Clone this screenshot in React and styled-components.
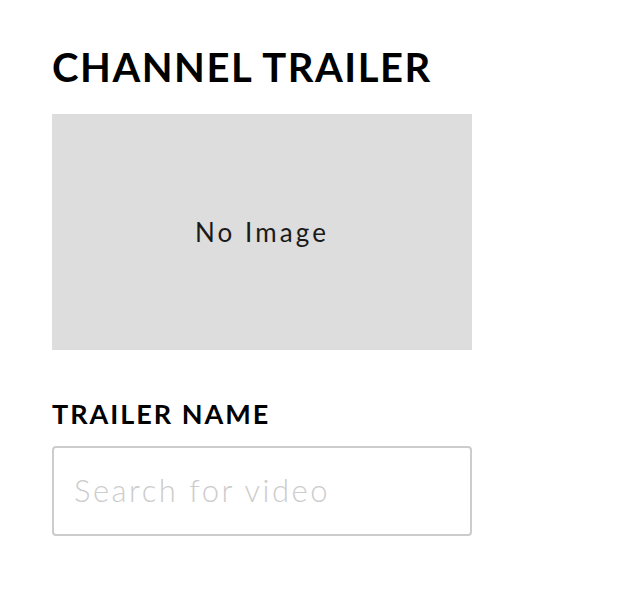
import styled, { createGlobalStyle } from 'styled-components'

const GlobalStyle = createGlobalStyle`
  html, body {
    margin: 0;
    padding: 0;
    background: #fff;
  }
  body {
    font-family: Lato, "Noto Sans", sans-serif;
    color: #000;
  }
`;

export const Wrapper = styled.div`
  display: flex;
  flex-direction: column;
  width: 420px;
  padding: 43px 52px 0;
`;

export const Title = styled.h1`
  margin: 0 0 23px;
  font-size: 40px;
  line-height: 48px;
  font-weight: 700;
  letter-spacing: 1.55px;
  color: #000;
`;

export const Preview = styled.div`
  display: flex;
  align-items: center;
  justify-content: center;
  height: 236px;
  background-color: #dddddd;
  font-size: 26px;
  letter-spacing: 3.1px;
  color: #1a1a1a;
`;

export const Label = styled.label`
  display: block;
  margin: 48px 0 16px;
  font-size: 27px;
  line-height: 32px;
  font-weight: 700;
  letter-spacing: 2px;
`;

export const Input = styled.input`
  box-sizing: border-box;
  width: 100%;
  height: 90px;
  padding: 0 20px 3px;
  border: 2px solid #cccccc;
  border-radius: 4px;
  font-family: Lato, "Noto Sans", sans-serif;
  font-size: 31px;
  font-weight: 300;
  letter-spacing: 2.5px;
  outline: none;

  &::placeholder {
    color: #cccccc;
  }
`;

export default function App() {
  return (
    <>
      <GlobalStyle />
      <Wrapper>
        <Title>CHANNEL TRAILER</Title>
        <Preview>No Image</Preview>
        <Label htmlFor="trailer">TRAILER NAME</Label>
        <Input id="trailer" placeholder="Search for video" />
      </Wrapper>
    </>
  );
}
